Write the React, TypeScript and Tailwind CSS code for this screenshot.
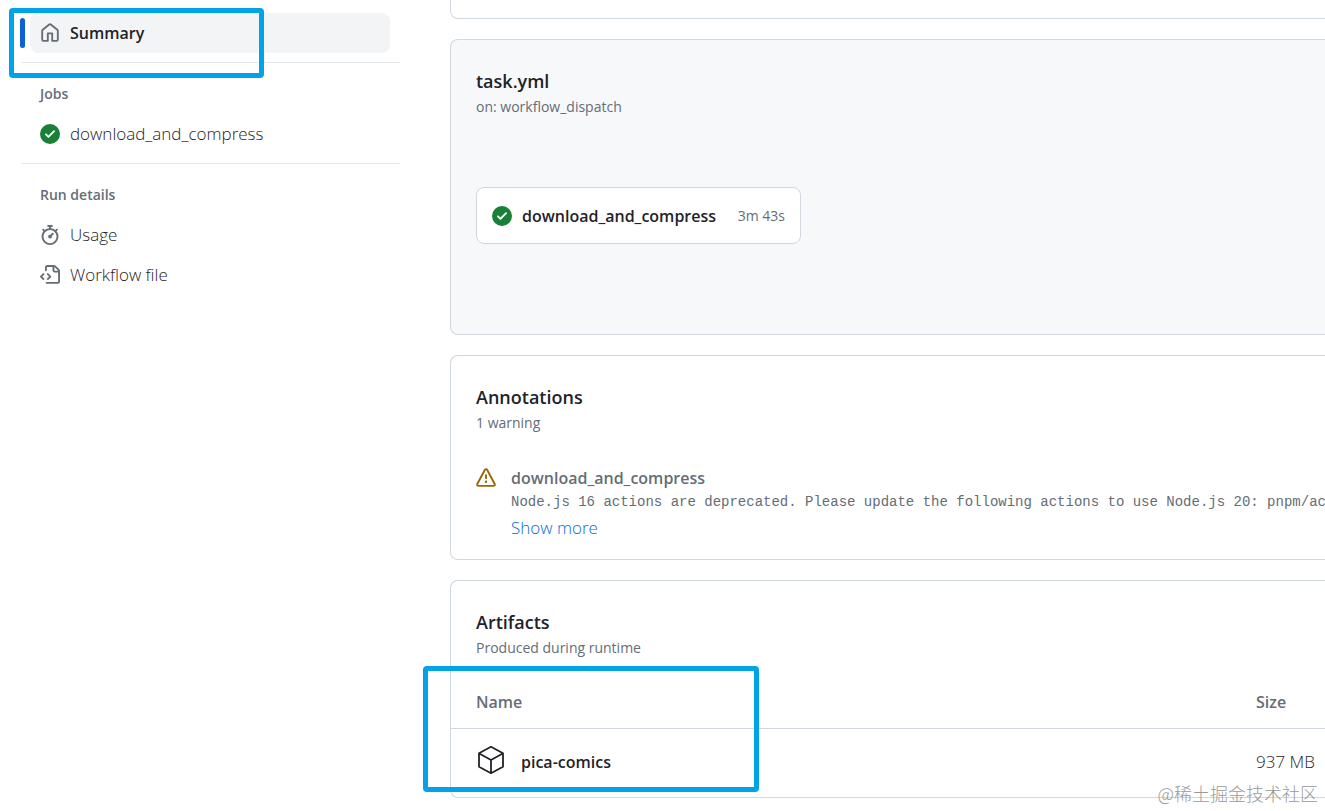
import type { ReactNode } from 'react';

const paths = {
  home: 'M6.906.664a1.749 1.749 0 0 1 2.187 0l5.25 4.2c.415.332.657.835.657 1.367v7.019A1.75 1.75 0 0 1 13.25 15h-3.5a.75.75 0 0 1-.75-.75V9H7v5.25a.75.75 0 0 1-.75.75h-3.5A1.75 1.75 0 0 1 1 13.25V6.23c0-.531.242-1.034.657-1.366l5.25-4.2Zm1.25 1.171a.25.25 0 0 0-.312 0l-5.25 4.2a.25.25 0 0 0-.094.196v7.019c0 .138.112.25.25.25H5.5V8.25a.75.75 0 0 1 .75-.75h3.5a.75.75 0 0 1 .75.75v5.25h2.75a.25.25 0 0 0 .25-.25V6.23a.25.25 0 0 0-.094-.195Z',
  check: 'M8 16A8 8 0 1 1 8 0a8 8 0 0 1 0 16Zm3.78-9.72a.751.751 0 0 0-.018-1.042.751.751 0 0 0-1.042-.018L6.75 9.19 5.28 7.72a.751.751 0 0 0-1.042.018.751.751 0 0 0-.018 1.042l2 2a.75.75 0 0 0 1.06 0Z',
  stopwatch: 'M5.75.75A.75.75 0 0 1 6.5 0h3a.75.75 0 0 1 0 1.5h-.75v1l-.001.041a6.724 6.724 0 0 1 3.464 1.435l.007-.006.75-.75a.749.749 0 0 1 1.275.326.749.749 0 0 1-.215.734l-.75.75-.006.007a6.75 6.75 0 1 1-10.548 0L2.72 5.03l-.75-.75a.751.751 0 0 1 .018-1.042.751.751 0 0 1 1.042-.018l.75.75.007.006A6.72 6.72 0 0 1 7.25 2.541V1.5H6.5a.75.75 0 0 1-.75-.75ZM8 14.5a5.25 5.25 0 1 0 0-10.5 5.25 5.25 0 0 0 0 10.5Zm.389-6.7 1.33-1.33a.75.75 0 1 1 1.061 1.06L9.45 8.861A1.503 1.503 0 0 1 8 10.75a1.499 1.499 0 1 1 .389-2.95Z',
  fileCode: 'M4 1.75C4 .784 4.784 0 5.75 0h5.586c.464 0 .909.184 1.237.513l2.914 2.914c.329.328.513.773.513 1.237v8.586A1.75 1.75 0 0 1 14.25 15h-9a.75.75 0 0 1 0-1.5h9a.25.25 0 0 0 .25-.25V6h-2.75A1.75 1.75 0 0 1 10 4.25V1.5H5.75a.25.25 0 0 0-.25.25v2.5a.75.75 0 0 1-1.5 0Zm1.72 4.97a.75.75 0 0 1 1.06 0l2 2a.75.75 0 0 1 0 1.06l-2 2a.749.749 0 0 1-1.275-.326.749.749 0 0 1 .215-.734l1.47-1.47-1.47-1.47a.75.75 0 0 1 0-1.06ZM3.28 7.78 1.81 9.25l1.47 1.47a.751.751 0 0 1-.018 1.042.751.751 0 0 1-1.042.018l-2-2a.75.75 0 0 1 0-1.06l2-2a.751.751 0 0 1 1.042.018.751.751 0 0 1 .018 1.042Zm8.22-6.218V4.25c0 .138.112.25.25.25h2.688l-.011-.013-2.914-2.914-.013-.011Z',
  alert: 'M6.457 1.047c.659-1.234 2.427-1.234 3.086 0l6.082 11.378A1.75 1.75 0 0 1 14.082 15H1.918a1.75 1.75 0 0 1-1.543-2.575Zm1.763.707a.25.25 0 0 0-.44 0L1.698 13.132a.25.25 0 0 0 .22.368h12.164a.25.25 0 0 0 .22-.368Zm.53 3.996v2.5a.75.75 0 0 1-1.5 0v-2.5a.75.75 0 0 1 1.5 0ZM9 11a1 1 0 1 1-2 0 1 1 0 0 1 2 0Z',
};

function Icon({ name, className }: { name: keyof typeof paths; className: string }) {
  return (
    <svg viewBox="0 0 16 16" fill="currentColor" aria-hidden="true" className={`size-5 shrink-0 ${className}`}>
      <path d={paths[name]} />
    </svg>
  );
}

function PackageIcon() {
  return (
    <svg viewBox="0 0 30 30" fill="none" stroke="currentColor" strokeWidth="1.8" strokeLinejoin="round" strokeLinecap="round" aria-hidden="true" className="size-[30px] shrink-0">
      <path d="M15 1.8 27 8.2v13.6L15 28.2 3 21.8V8.2ZM3.3 8.5 15 15l11.7-6.5M15 15v13" />
    </svg>
  );
}

function NavItem({ icon, color = 'text-[#656d76]', children }: { icon: keyof typeof paths; color?: string; children: ReactNode }) {
  return (
    <a href="#" className="mr-[10px] ml-2 flex h-10 items-center gap-[10px] rounded-lg px-[10px]">
      <Icon name={icon} className={color} />
      <span className="text-[17px] font-light">{children}</span>
    </a>
  );
}

function NavHeading({ children }: { children: ReactNode }) {
  return <h3 className="mt-[21px] mb-[10px] ml-[18px] text-sm leading-5 font-semibold text-[#656d76]">{children}</h3>;
}

function CardHeading({ title, note }: { title: string; note: string }) {
  return (
    <header className="px-[25px] pt-[27px]">
      <h2 className="text-lg leading-7 font-semibold">{title}</h2>
      <p className="text-sm leading-6 text-[#656d76]">{note}</p>
    </header>
  );
}

const card = 'rounded-l-lg border border-r-0 border-[#d0d7de]';

export default function App() {
  return (
    <div className="relative flex min-h-screen overflow-hidden bg-white font-['Open_Sans','Noto_Sans',sans-serif] text-base text-[#1f2328]">
      <aside className="w-[450px] shrink-0 pt-[13px] pr-[50px] pl-[22px]">
        <nav aria-label="Workflow run">
          <div className="relative">
            <a href="#" aria-current="page" className="mr-[10px] ml-2 flex h-10 items-center gap-[10px] rounded-lg bg-[#f3f4f6] px-[10px] font-semibold">
              <Icon name="home" className="text-[#656d76]" />
              <span>Summary</span>
            </a>
            <span className="absolute top-[5px] left-[-2px] h-[30px] w-[5px] rounded-full bg-[#0b62d6]" />
            <span className="pointer-events-none absolute top-[-5px] left-[-13px] h-[70px] w-[255px] rounded-sm border-5 border-[#00a2e8]" />
          </div>
          <hr className="mt-[9px] border-[#e5e8eb]" />
          <NavHeading>Jobs</NavHeading>
          <NavItem icon="check" color="text-[#1a7f37]">download_and_compress</NavItem>
          <hr className="mt-[9px] border-[#e5e8eb]" />
          <NavHeading>Run details</NavHeading>
          <NavItem icon="stopwatch">Usage</NavItem>
          <NavItem icon="fileCode">Workflow file</NavItem>
        </nav>
      </aside>

      <main className="flex min-w-0 flex-1 flex-col gap-5">
        <div className="h-[19px] rounded-bl-lg border-b border-l border-[#d0d7de]" />

        <section className={`${card} bg-[#f6f8fa] pb-[90px]`}>
          <CardHeading title="task.yml" note="on: workflow_dispatch" />
          <a href="#" className="mt-[68px] ml-[25px] flex h-[57px] w-[325px] items-center gap-[10px] rounded-lg border border-[#d0d7de] bg-white px-[15px]">
            <Icon name="check" className="text-[#1a7f37]" />
            <span className="font-semibold">download_and_compress</span>
            <span className="ml-auto text-sm text-[#656d76]">3m 43s</span>
          </a>
        </section>

        <section className={`${card} pb-[17px]`}>
          <CardHeading title="Annotations" note="1 warning" />
          <div className="mt-[31px] flex gap-[15px] pl-[25px]">
            <div className="flex h-6 items-center">
              <Icon name="alert" className="text-[#9a6700]" />
            </div>
            <div className="min-w-0 flex-1 overflow-hidden">
              <h3 className="leading-6 font-semibold text-[#656d76]">download_and_compress</h3>
              <p className="font-['Liberation_Mono',monospace] text-sm leading-6 whitespace-nowrap text-[#656d76]">
                Node.js 16 actions are deprecated. Please update the following actions to use Node.js 20: pnpm/action-setup@v2.
              </p>
              <button type="button" className="block text-[17px] leading-7 font-light text-[#0969da]">Show more</button>
            </div>
          </div>
        </section>

        <section className={`${card} relative`}>
          <CardHeading title="Artifacts" note="Produced during runtime" />
          <table className="mt-4 w-full text-left">
            <thead>
              <tr className="h-[52px] border-b border-[#d0d7de] text-[#656d76]">
                <th className="pl-[25px] font-semibold">Name</th>
                <th className="w-[69px] font-semibold">Size</th>
              </tr>
            </thead>
            <tbody>
              <tr className="h-[69px]">
                <td className="pb-[2px] pl-[25px]">
                  <a href="#" className="flex items-start gap-[15px] leading-[34px] font-semibold">
                    <PackageIcon />
                    pica-comics
                  </a>
                </td>
                <td className="pb-[2px] text-[17px] font-light whitespace-nowrap">937 MB</td>
              </tr>
            </tbody>
          </table>
          <span className="pointer-events-none absolute top-[85px] left-[-28px] h-[126px] w-[336px] rounded-sm border-5 border-[#00a2e8]" />
        </section>
      </main>

      <div className="pointer-events-none absolute right-[7px] bottom-[6px] font-['Noto_Sans_CJK_SC',sans-serif] text-lg leading-6 font-light text-[#8c8c8c]/90">
        @稀土掘金技术社区
      </div>
    </div>
  );
}
